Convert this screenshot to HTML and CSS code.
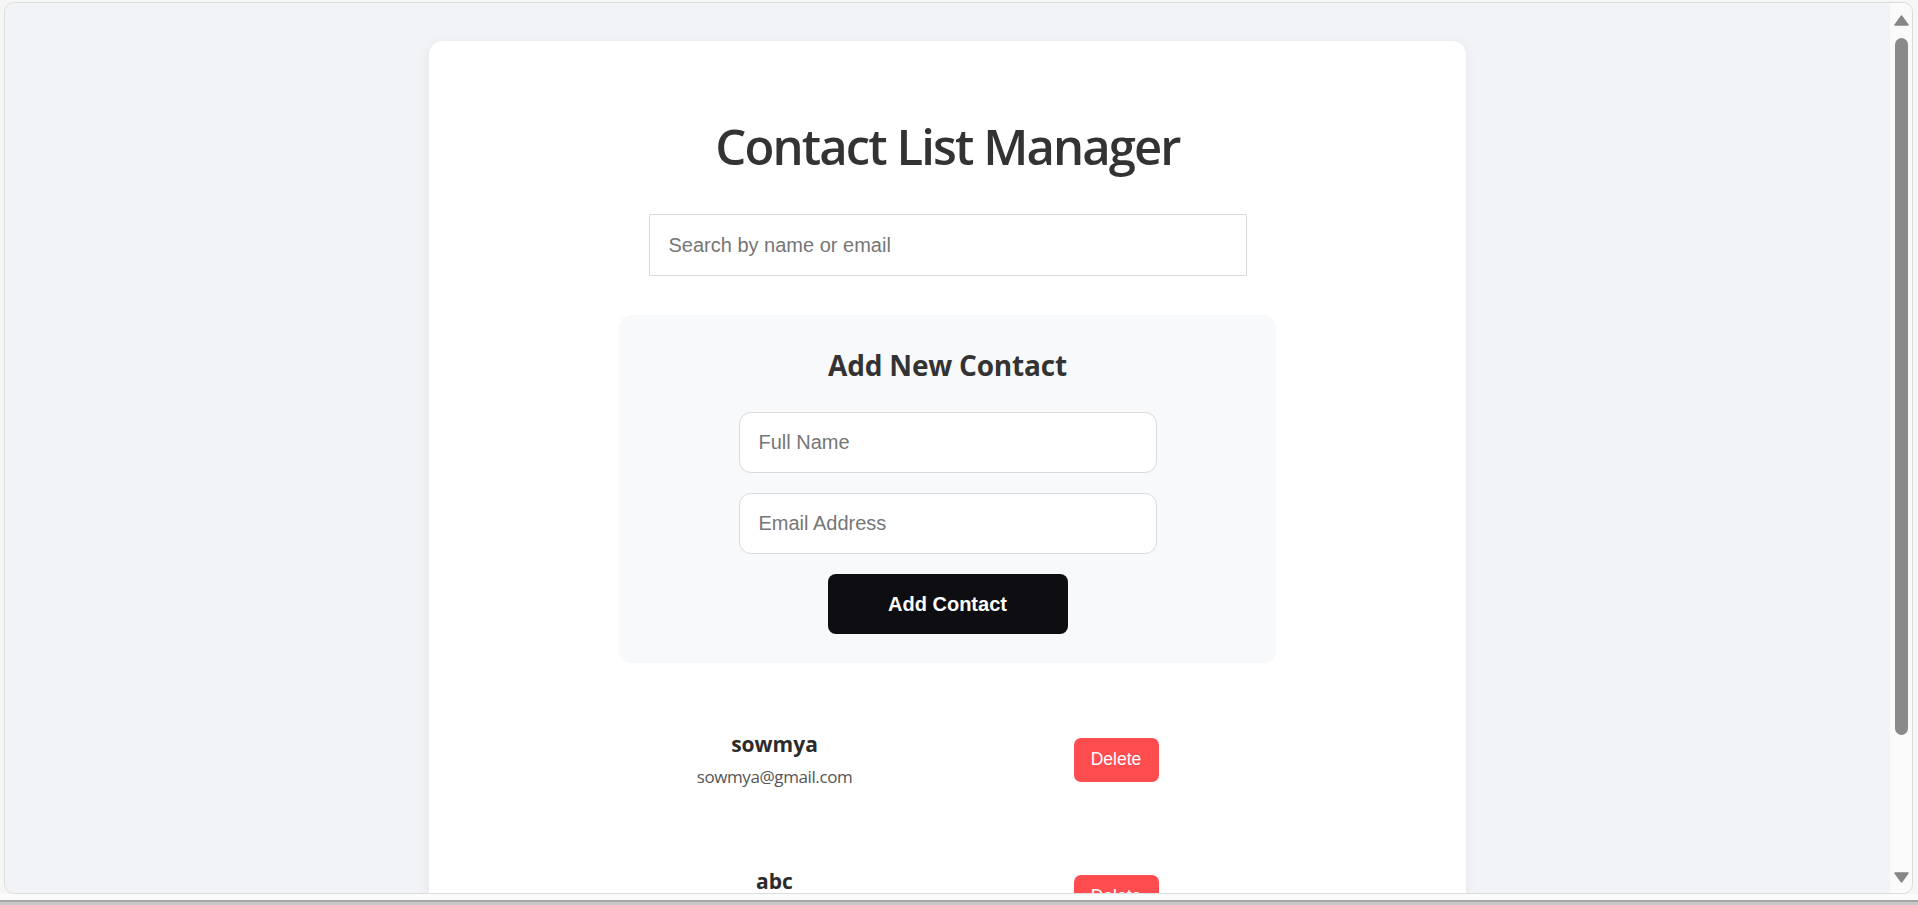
FILE: index.html
```html
<!DOCTYPE html>
<html lang="en">
<head>
<meta charset="utf-8">
<title>Contact List Manager</title>
<link rel="stylesheet" href="styles.css">
</head>
<body>
<div class="window">
  <div class="viewport">
    <main class="card">
      <h1 class="title">Contact List Manager</h1>
      <input class="search" type="text" placeholder="Search by name or email">
      <section class="add-form">
        <h2 class="form-title">Add New Contact</h2>
        <input class="field" type="text" placeholder="Full Name">
        <input class="field" type="email" placeholder="Email Address">
        <button class="add-btn" type="button">Add Contact</button>
      </section>
      <ul class="contact-list">
        <li class="contact">
          <div class="info">
            <div class="name">sowmya</div>
            <div class="email">sowmya@gmail.com</div>
          </div>
          <button class="delete-btn" type="button">Delete</button>
        </li>
        <li class="contact">
          <div class="info">
            <div class="name">abc</div>
            <div class="email">abc@gmail.com</div>
          </div>
          <button class="delete-btn" type="button">Delete</button>
        </li>
      </ul>
    </main>
  </div>
  <div class="scrollbar">
    <svg class="arrow up" width="15" height="11" viewBox="0 0 15 11"><polygon points="7.5,1 14,10 1,10" fill="#878787" stroke="#878787" stroke-width="1.5" stroke-linejoin="round"/></svg>
    <div class="thumb"></div>
    <div class="spacer"></div>
    <svg class="arrow down" width="15" height="11" viewBox="0 0 15 11"><polygon points="1,1 14,1 7.5,10" fill="#878787" stroke="#878787" stroke-width="1.5" stroke-linejoin="round"/></svg>
  </div>
</div>
<div class="gap"></div>
<div class="taskbar"></div>
</body>
</html>
```
FILE: styles.css
```css
* { box-sizing: border-box; }

html, body {
  margin: 0;
  height: 905px;
  overflow: hidden;
}

body {
  background: #f6f6f6;
  display: flex;
  flex-direction: column;
  font-family: "Open Sans", "Noto Sans", sans-serif;
}

.window {
  margin: 2px 5px 0 4px;
  height: 892px;
  border: 1px solid #dcdcdc;
  border-radius: 10px;
  overflow: hidden;
  display: flex;
  background: #f3f4f6;
}

.viewport {
  flex: 1;
  overflow: hidden;
  background: #f2f3f6;
}

.scrollbar {
  width: 22px;
  background: #fafafa;
  display: flex;
  flex-direction: column;
  align-items: center;
  padding: 12px 0 10px;
}

.arrow { display: block; flex: none; }

.thumb {
  margin-top: 12px;
  width: 13px;
  height: 697px;
  border-radius: 7px;
  background: #8a8a8a;
}

.spacer { flex: 1; }

.gap { flex: 1; background: #fbfbfb; }

.taskbar {
  height: 5px;
  background: #c8c8c8;
  border-top: 2px solid #a6a6a6;
}

.card {
  width: 1037px;
  margin: 38px auto 0;
  min-height: 1000px;
  background: #ffffff;
  border-radius: 14px;
  box-shadow: 0 2px 14px rgba(0, 0, 0, 0.06);
  padding-top: 75px;
  display: flex;
  flex-direction: column;
  align-items: center;
}

.title {
  margin: 0;
  font-size: 49px;
  line-height: 60px;
  font-weight: 600;
  letter-spacing: -1.9px;
  color: #333333;
}

.search {
  margin-top: 38px;
  width: 598px;
  height: 62px;
  border: 1px solid #d9d9d9;
  border-radius: 1px;
  padding: 0 19px;
  font-family: "Liberation Sans", Arial, sans-serif;
  font-size: 20px;
  color: #333;
  outline: none;
}

.search::placeholder, .field::placeholder { color: #767676; }

.add-form {
  margin-top: 39px;
  width: 657px;
  background: #f8f9fa;
  border-radius: 12px;
  padding: 33px 0 29px;
  display: flex;
  flex-direction: column;
  align-items: center;
  gap: 20px;
}

.form-title {
  margin: 0 0 10px;
  font-size: 28px;
  line-height: 34px;
  font-weight: 700;
  letter-spacing: -0.2px;
  color: #333333;
}

.field {
  width: 418px;
  height: 61px;
  border: 1px solid #dadada;
  border-radius: 12px;
  background: #ffffff;
  padding: 0 19px;
  font-family: "Liberation Sans", Arial, sans-serif;
  font-size: 20px;
  outline: none;
}

.add-btn {
  width: 240px;
  height: 60px;
  border: none;
  border-radius: 8px;
  background: #0d0d12;
  color: #ffffff;
  font-family: "Liberation Sans", Arial, sans-serif;
  font-size: 20px;
  font-weight: 700;
}

.contact-list {
  list-style: none;
  margin: 28px 0 0;
  padding: 0;
  width: 598px;
}

.contact {
  height: 137px;
  padding: 0 88px 0 48px;
  display: flex;
  align-items: center;
  justify-content: space-between;
}

.info {
  width: 156px;
  text-align: center;
  display: flex;
  flex-direction: column;
  align-items: center;
  gap: 7px;
}

.name {
  font-size: 21px;
  line-height: 28px;
  font-weight: 700;
  color: #2b2b2b;
}

.email {
  font-size: 17px;
  line-height: 24px;
  letter-spacing: -0.4px;
  color: #555555;
  white-space: nowrap;
}

.delete-btn {
  width: 85px;
  height: 44px;
  border: none;
  border-radius: 7px;
  background: #ff4d4f;
  color: #ffffff;
  font-family: "Liberation Sans", Arial, sans-serif;
  font-size: 17.5px;
}
```
